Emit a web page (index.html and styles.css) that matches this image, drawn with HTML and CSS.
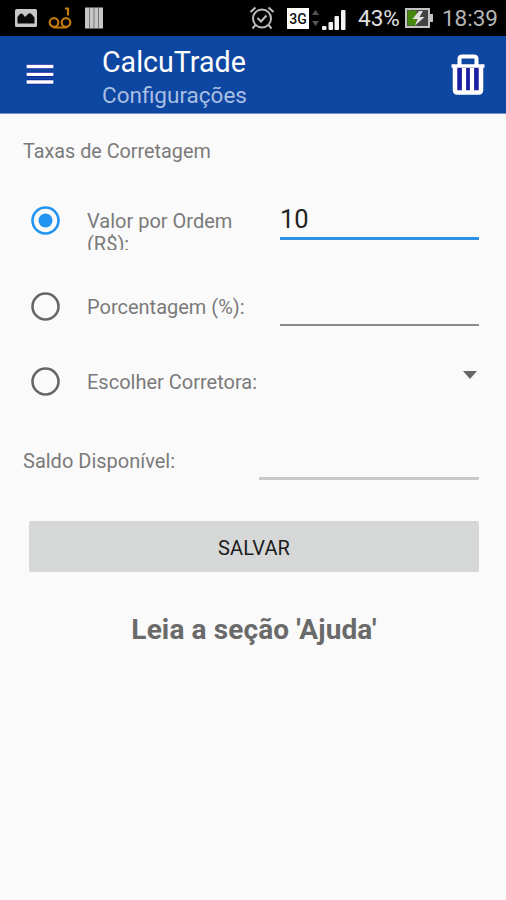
FILE: index.html
```html
<!DOCTYPE html>
<html lang="pt-BR">
<head>
<meta charset="utf-8">
<title>CalcuTrade</title>
<link rel="stylesheet" href="styles.css">
</head>
<body>
<div class="status">
  <svg class="i-image" width="24" height="20" viewBox="0 0 24 20"><rect x="1" y="1" width="22" height="18" rx="1.5" fill="#c8c8c8"/><path d="M3.500 15.500V9l2-2.500q2-2 4 .5l1.500 2 3-3q2-1.500 4 .5l2.500 3v6z" fill="#0a0a0a"/></svg>
  <svg class="i-voice" width="24" height="22" viewBox="0 0 24 22" fill="none" stroke="#c57a10" stroke-width="2.200"><circle cx="6" cy="15.500" r="4.300"/><circle cx="18" cy="15.500" r="4.300"/><path d="M5 20.500h14M17 1.500h3v7"/></svg>
  <svg class="i-bars" width="18" height="22" viewBox="0 0 18 22"><path d="M0 .5h18v21H0z" fill="#c6c6c6"/><path d="M4.500 1v20M9 1v20M13.500 1v20" stroke="#777" stroke-width="1"/></svg>
  <svg class="i-alarm" width="26" height="24" viewBox="0 0 26 24" fill="none" stroke="#bdbdbd" stroke-width="2"><circle cx="13" cy="12.500" r="9"/><path d="M8.500 12l3.500 3.500 5.500-6M1.500 6l5-4.500M24.500 6l-5-4.500M6.500 19l-3 3.500M19.500 19l3 3.500"/></svg>
  <span class="net">3G</span>
  <svg class="i-data" width="7" height="18" viewBox="0 0 7 18" fill="#555"><path d="M0 6l3.500-5L7 6zM0 12l3.500 5L7 12z"/></svg>
  <svg class="i-signal" width="26" height="22" viewBox="0 0 26 22" fill="#f2f2f2"><rect x="1" y="17" width="4.500" height="4" rx="1"/><rect x="7.500" y="13" width="4.500" height="8" rx="1"/><rect x="13.500" y="7" width="4.500" height="14" rx="1"/><rect x="20" y="1" width="4.500" height="20" rx="1"/></svg>
  <span class="pct">43%</span>
  <svg class="i-batt" width="28" height="20" viewBox="0 0 28 20"><rect x="1" y="1" width="23" height="18" fill="#444" stroke="#c4c4c4" stroke-width="2"/><path d="M2.500 2.500h9v15h-9z" fill="#47890f"/><path d="M24 6h4v8h-4z" fill="#c4c4c4"/><path d="M14 3L7.500 11h5L10 17.500 19.500 9h-5L18 3z" fill="#e0e0e0"/></svg>
  <span class="clock">18:39</span>
</div>
<header class="bar">
  <svg class="menu" width="28" height="21" viewBox="0 0 28 21"><path d="M1 2.500h26M1 10.300h26M1 18h26" stroke="#1515a0" stroke-width="5"/><path d="M.7 2.500h26.600M.7 10.300h26.600M.7 18h26.600" stroke="#fff" stroke-width="3.300"/></svg>
  <div class="titles">
    <h1>CalcuTrade</h1>
    <p>Configurações</p>
  </div>
  <svg class="trash" width="36" height="42" viewBox="0 0 36 42"><path d="M5 13h26v24H5z" fill="#1b1fa0"/><g fill="none" stroke="#fff"><path d="M1.500 12h33" stroke-width="3.600"/><path d="M9.500 11V5q0-2.500 2.500-2.500h12q2.500 0 2.500 2.500v6" stroke-width="4"/><path d="M5 12v24q0 2.500 2.500 2.500h21q2.500 0 2.500-2.500V12" stroke-width="4.500"/><path d="M14 14v23M22 14v23" stroke-width="4.200"/></g></svg>
</header>
<main class="form">
  <h2 class="label section">Taxas de Corretagem</h2>
  <div class="row first">
    <svg class="radio on" width="29" height="29" viewBox="0 0 29 29"><circle class="ring" cx="14.500" cy="14.500" r="13"/><circle class="dot" cx="14.500" cy="14.500" r="7"/></svg>
    <span class="label opt clip">Valor por Ordem (R$):</span>
    <span class="field active">10</span>
  </div>
  <div class="row second">
    <svg class="radio" width="29" height="29" viewBox="0 0 29 29"><circle class="ring" cx="14.500" cy="14.500" r="13"/></svg>
    <span class="label opt">Porcentagem (%):</span>
    <span class="field"></span>
  </div>
  <div class="row third">
    <svg class="radio" width="29" height="29" viewBox="0 0 29 29"><circle class="ring" cx="14.500" cy="14.500" r="13"/></svg>
    <span class="label opt wide">Escolher Corretora:</span>
    <svg class="caret" width="14" height="8" viewBox="0 0 14 8"><path d="M0 0h14L7 8z" fill="#666"/></svg>
  </div>
  <div class="row saldo">
    <span class="label">Saldo Disponível:</span>
    <span class="field soft"></span>
  </div>
  <button class="save">SALVAR</button>
  <p class="help">Leia a seção 'Ajuda'</p>
</main>
</body>
</html>
```
FILE: styles.css
```css
* { box-sizing: border-box; }
body { margin: 0; height: 900px; background: #fafafa; font-family: Roboto, sans-serif; overflow: hidden; }
h1, h2, p { margin: 0; font-weight: 400; }
svg { display: block; flex: none; }

.status { display: flex; align-items: center; height: 36px; padding: 0 8px 0 14px; background: #000; color: #ccc; }
.i-voice { margin-left: 10px; }
.i-bars { margin-left: 13px; }
.i-alarm { margin-left: 146px; }
.net { width: 22px; height: 21px; margin-left: 12px; background: #fff; color: #111; font-size: 14px; font-weight: 500; line-height: 22px; text-align: center; }
.i-data { margin-left: 3px; }
.i-signal { margin-left: 2px; margin-top: 3px; }
.pct { width: 42px; margin-left: 11px; font-size: 22.5px; color: #e0e0e0; white-space: nowrap; }
.i-batt { margin-left: 5px; }
.clock { margin-left: auto; font-size: 22.5px; color: #b5b5b5; }

.bar { display: flex; height: 78px; padding: 0 20px 0 26px; background: #0e47a1; border-bottom: 1px solid #7893c4; }
.menu { margin-top: 28px; }
.titles { flex: 1; margin-left: 48px; padding-top: 9px; }
.titles h1 { font-size: 28.6px; line-height: 34px; color: #fff; }
.titles p { font-size: 22.5px; line-height: 32px; color: #a9bee3; }
.trash { margin-top: 18px; }

.form { padding: 26px 27px 0 23px; }
.label { font-size: 20px; line-height: 23px; color: #7a7a7a; white-space: nowrap; }
.section { font-size: 19.8px; }
.row { display: flex; align-items: flex-start; }
.first { margin-top: 42px; height: 86px; }
.second { height: 75px; }
.third { height: 84px; }
.radio { margin: 1px 0 0 8px; }
.ring { fill: none; stroke: #666; stroke-width: 2.6; }
.on .ring { stroke: #2094f0; }
.dot { fill: #2094f0; }
.opt { width: 164px; margin: 5px 0 0 27px; }
.clip { height: 40px; overflow: hidden; white-space: normal; }
.wide { width: 180px; }
.field { flex: 1; height: 35px; margin-left: 29px; border-bottom: 2px solid #8a8a8a; }
.field.active { height: 35px; border-bottom: 3px solid #3090e4; font-size: 25.5px; line-height: 28px; color: #222; }
.field.soft { flex: none; width: 220px; height: 30px; margin: 0 0 0 auto; border-bottom: 3px solid #c9c9c9; }
.caret { margin: 5px 2px 0 auto; }
.save { display: block; width: 450px; height: 51px; margin: 41px 0 0 6px; padding: 2px 0 0; border: 0; border-radius: 2px; background: #d6d8d7; font: 400 20px Roboto, sans-serif; letter-spacing: .1px; color: #1c1c1c; }
.help { margin: 41px 0 0 6px; text-align: center; font-size: 28px; font-weight: 700; letter-spacing: .12px; line-height: 34px; color: #6a6a6a; }
```
